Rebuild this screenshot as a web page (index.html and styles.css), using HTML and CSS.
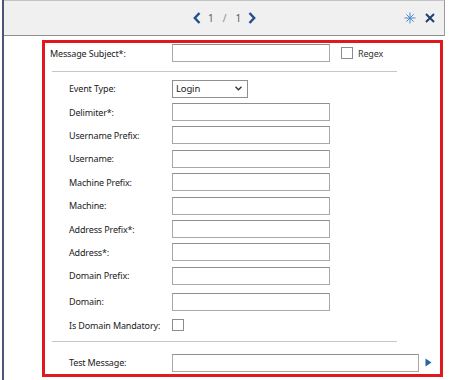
FILE: index.html
```html
<!DOCTYPE html>
<html lang="en">
<head>
    <meta charset="UTF-8">
    <title>Parser Rule</title>
    <link rel="stylesheet" href="styles.css">
</head>
<body>

<div class="frame">
    <div class="toolbar">
        <div class="pager">
            <svg class="chev" width="8" height="12" viewBox="0 0 8 12"><path d="M6.5 1 L1.8 6 L6.5 11" fill="none" stroke="#1f4f86" stroke-width="2.4"/></svg>
            <span class="num">1</span>
            <span class="slash">/</span>
            <span class="num">1</span>
            <svg class="chev" width="8" height="12" viewBox="0 0 8 12"><path d="M1.5 1 L6.2 6 L1.5 11" fill="none" stroke="#1f4f86" stroke-width="2.4"/></svg>
        </div>
        <div class="tools">
            <svg width="12" height="12" viewBox="0 0 12 12"><path d="M6 0.5 V11.5 M0.5 6 H11.5 M2.3 2.3 L9.7 9.7 M9.7 2.3 L2.3 9.7" stroke="#4a8acb" stroke-width="1"/></svg>
            <svg width="10" height="10" viewBox="0 0 10 10"><path d="M1 1 L9 9 M9 1 L1 9" stroke="#1f3f6c" stroke-width="2"/></svg>
        </div>
    </div>

    <div class="form">
        <div class="row top">
            <label class="lbl wide">Message Subject*:</label>
            <div class="box"></div>
            <span class="check"></span>
            <span class="check-lbl">Regex</span>
        </div>
        <div class="sep"></div>

        <div class="fields">
            <div class="row">
                <label class="lbl">Event Type:</label>
                <div class="select">Login
                    <svg width="7" height="5" viewBox="0 0 7 5"><path d="M0.5 0.8 L3.5 3.8 L6.5 0.8" fill="none" stroke="#333" stroke-width="1.3"/></svg>
                </div>
            </div>
            <div class="row"><label class="lbl">Delimiter*:</label><div class="box"></div></div>
            <div class="row"><label class="lbl">Username Prefix:</label><div class="box"></div></div>
            <div class="row"><label class="lbl">Username:</label><div class="box"></div></div>
            <div class="row"><label class="lbl">Machine Prefix:</label><div class="box"></div></div>
            <div class="row"><label class="lbl">Machine:</label><div class="box"></div></div>
            <div class="row"><label class="lbl">Address Prefix*:</label><div class="box"></div></div>
            <div class="row"><label class="lbl">Address*:</label><div class="box"></div></div>
            <div class="row"><label class="lbl">Domain Prefix:</label><div class="box"></div></div>
            <div class="row domain"><label class="lbl">Domain:</label><div class="box"></div></div>
            <div class="row"><label class="lbl">Is Domain Mandatory:</label><span class="check"></span></div>
        </div>
        <div class="sep"></div>

        <div class="row test">
            <label class="lbl">Test Message:</label>
            <div class="box long"></div>
            <svg class="play" width="7" height="9" viewBox="0 0 7 9"><path d="M0.5 0.5 L6.5 4.5 L0.5 8.5 Z" fill="#2b62a3"/></svg>
        </div>
    </div>
</div>

</body>
</html>
```

FILE: styles.css
```css
body {
    margin: 0;
    background: #ffffff;
    font-family: "Noto Sans", "Open Sans", sans-serif;
    font-size: 9px;
    letter-spacing: -0.15px;
    color: #222;
}
.frame {
    margin-left: 2px;
    width: 441px;
    height: 380px;
    border-left: 2px solid #4d5574;
}
.toolbar {
    height: 34px;
    background: #f0f0f0;
    border-top: 1px solid #c4c4c4;
    border-bottom: 1px solid #8e8e8e;
    border-right: 1px solid #9a9a9a;
    display: flex;
    align-items: center;
}
.pager {
    margin-left: 189px;
    display: flex;
    align-items: center;
    gap: 7px;
    color: #5a5a5a;
    font-size: 10px;
    letter-spacing: 0;
}
.pager .slash {
    color: #888;
    margin: 0 2px;
}
.tools {
    margin-left: auto;
    margin-right: 9px;
    display: flex;
    align-items: center;
    gap: 9px;
}
.form {
    margin: 4px 0 0 38px;
    width: 395px;
    height: 331px;
    border: 3px solid #e0191f;
}
.row {
    display: flex;
    align-items: center;
    height: 23.4px;
    padding-left: 24px;
}
.row.top {
    height: 18px;
    margin-top: 1px;
    padding-left: 5px;
}
.lbl {
    width: 103px;
    flex-shrink: 0;
}
.lbl.wide {
    width: 122px;
}
.box {
    width: 156px;
    height: 16px;
    border: 1px solid #a8a8a8;
    border-top-color: #8f8f8f;
    background: #fff;
}
.box.long {
    width: 245px;
}
.check {
    display: inline-block;
    width: 10px;
    height: 10px;
    border: 1px solid #8c8c8c;
    background: #fff;
}
.row.top .check {
    margin-left: 11px;
}
.check-lbl {
    margin-left: 5px;
    color: #333;
}
.sep {
    margin: 9px 0 0 7px;
    width: 345px;
    height: 1px;
    background: #c6c6c6;
}
.fields {
    margin-top: 5px;
}
.row.domain {
    height: 26px;
    padding-top: 2px;
    box-sizing: border-box;
}
.select {
    width: 66px;
    height: 16px;
    border: 1px solid #8f8f8f;
    padding: 0 5px 0 3px;
    display: flex;
    align-items: center;
    justify-content: space-between;
    font-size: 9.5px;
}
.fields + .sep {
    margin-top: 4px;
}
.row.test {
    margin-top: 12px;
    height: 18px;
}
.play {
    margin-left: 6px;
}
```
